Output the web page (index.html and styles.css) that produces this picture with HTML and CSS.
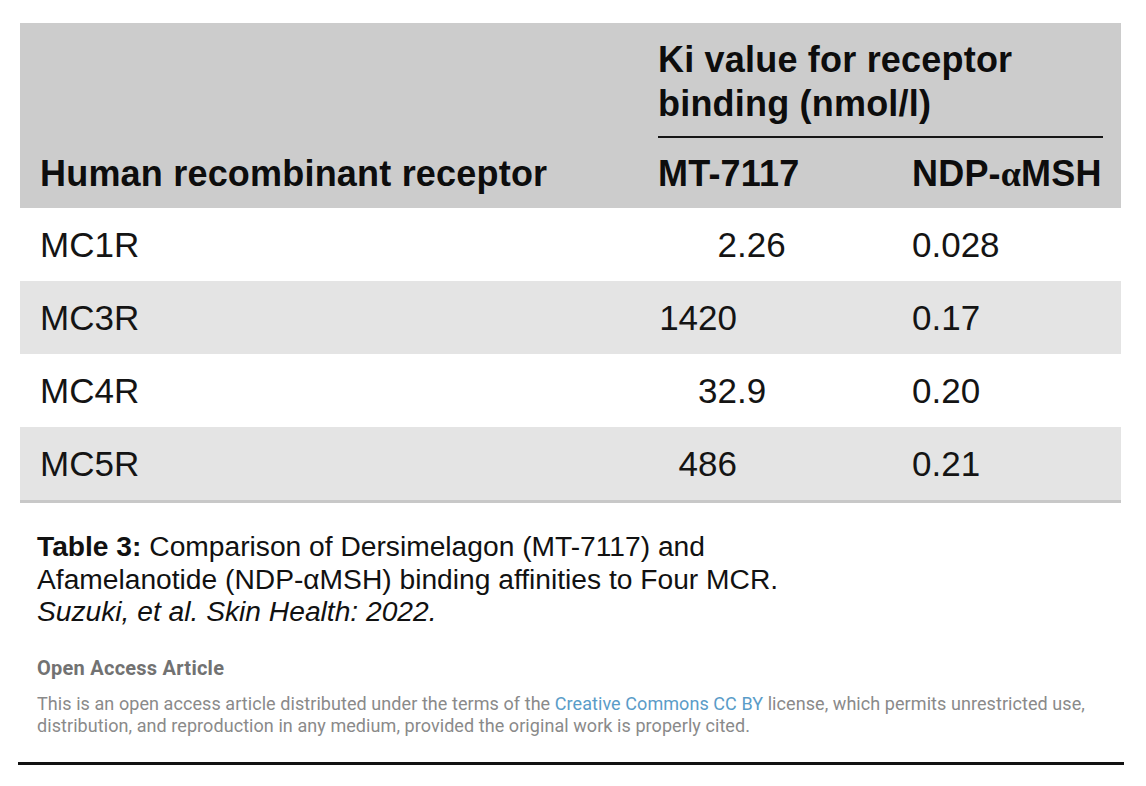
FILE: index.html
```html
<!DOCTYPE html>
<html lang="en">
<head>
<meta charset="utf-8">
<title>Table 3</title>
<link rel="stylesheet" href="styles.css">
</head>
<body>
<div class="page">
  <table class="data">
    <colgroup>
      <col class="col-rcpt">
      <col class="col-mt">
      <col class="col-ndp">
    </colgroup>
    <thead>
      <tr>
        <th rowspan="2" class="rcpt">Human recombinant receptor</th>
        <th colspan="2" class="ki"><div class="ki-text">Ki value for receptor<br>binding (nmol/l)</div></th>
      </tr>
      <tr>
        <th class="sub c2">MT-7117</th>
        <th class="sub c3">NDP-<span class="alpha">α</span>MSH</th>
      </tr>
    </thead>
    <tbody>
      <tr><td class="c1">MC1R</td><td class="c2"><span class="int">2</span><span class="frac">.26</span></td><td class="c3">0.028</td></tr>
      <tr class="alt"><td class="c1">MC3R</td><td class="c2"><span class="int">1420</span></td><td class="c3">0.17</td></tr>
      <tr><td class="c1">MC4R</td><td class="c2"><span class="int">32</span><span class="frac">.9</span></td><td class="c3">0.20</td></tr>
      <tr class="alt last"><td class="c1">MC5R</td><td class="c2"><span class="int">486</span></td><td class="c3">0.21</td></tr>
    </tbody>
  </table>

  <p class="caption"><b>Table 3:</b> Comparison of Dersimelagon (MT-7117) and<br>Afamelanotide (NDP-αMSH) binding affinities to Four MCR.<br><i>Suzuki, et al. Skin Health: 2022.</i></p>

  <div class="oa">
    <h2 class="oa-title">Open Access Article</h2>
    <p class="oa-text">This is an open access article distributed under the terms of the <a href="#" class="oa-link">Creative Commons CC BY</a> license, which permits unrestricted use,<br>distribution, and reproduction in any medium, provided the original work is properly cited.</p>
  </div>

  <hr class="rule">
</div>
</body>
</html>
```

FILE: styles.css
```css
html, body {
  margin: 0;
  padding: 0;
  background: #ffffff;
}

.page {
  padding-top: 23px;
  font-family: "Liberation Sans", Arial, sans-serif;
  color: #111111;
}

.data {
  margin-left: 20px;
  width: 1101px;
  border-collapse: collapse;
  table-layout: fixed;
}

.col-rcpt { width: 637px; }
.col-mt { width: 255px; }
.col-ndp { width: 209px; }

.data th,
.data td {
  padding: 0;
  text-align: left;
}

.data thead th {
  background: #cccccc;
  font-size: 36px;
  font-weight: bold;
  line-height: 44px;
  color: #0d0d0d;
  letter-spacing: 0.2px;
}

.data th.rcpt {
  padding-left: 20px;
  padding-bottom: 12px;
  vertical-align: bottom;
}

.data th.ki {
  padding: 15px 18px 0 1px;
  vertical-align: top;
}

.ki-text {
  padding-bottom: 10px;
  border-bottom: 2px solid #151515;
}

.data th.sub {
  padding-top: 14px;
  padding-bottom: 12px;
}

.data th.c2 {
  padding-left: 1px;
}

.data th.c3 {
  padding-left: 0;
}

.alpha {
  font-family: "Liberation Serif", "Times New Roman", serif;
  font-weight: bold;
}

.data tbody td {
  height: 73px;
  font-size: 35px;
  line-height: 73px;
  color: #141414;
  vertical-align: middle;
}

.data tbody tr.alt td {
  background: #e4e4e4;
}

.data tbody tr.last td {
  border-bottom: 3px solid #c8c8c8;
}

.data td.c1 {
  padding-left: 20px;
}

.data td.c2 {
  padding-left: 0;
  white-space: nowrap;
}

.int {
  display: inline-block;
  width: 80px;
  text-align: right;
}

.data td.c3 {
  padding-left: 0;
}

.caption {
  margin: 27px 0 0 37px;
  font-size: 28.2px;
  line-height: 32.5px;
  color: #111111;
}

.caption b {
  font-weight: bold;
}

.oa {
  margin: 29px 0 0 37px;
  font-family: Roboto, "Liberation Sans", sans-serif;
}

.oa-title {
  margin: 0;
  font-size: 20px;
  line-height: 23px;
  font-weight: bold;
  color: #727272;
  letter-spacing: 0.25px;
}

.oa-text {
  margin: 13px 0 0;
  font-size: 18px;
  line-height: 22px;
  color: #8a8a8a;
  letter-spacing: 0.07px;
}

.oa-link {
  color: #5a9cc8;
  text-decoration: none;
}

.rule {
  margin: 25px 0 0 18px;
  width: 1106px;
  height: 3px;
  border: 0;
  background: #111111;
}
```
